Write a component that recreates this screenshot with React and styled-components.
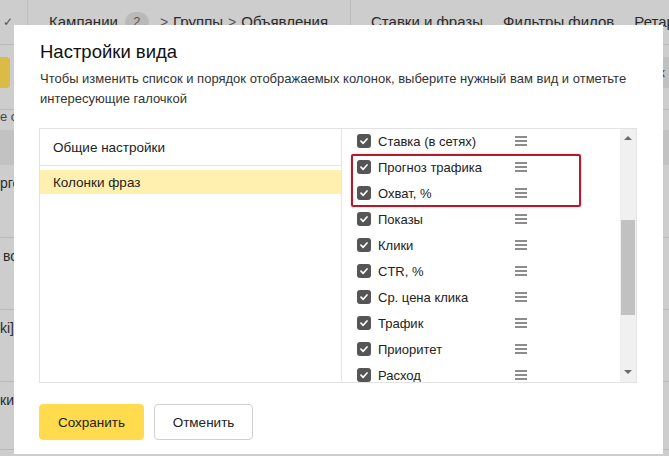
import React from 'react'
import styled, { createGlobalStyle } from 'styled-components'

const GlobalStyle = createGlobalStyle`
html, body {
  margin: 0;
  padding: 0;
}
body {
  font-family: "Liberation Sans", Arial, sans-serif;
  color: #222;
}
`;

const Screen = styled.div`
position: relative;
width: 669px;
height: 456px;
overflow: hidden;
background: #cdcdcd;
`;

/* ---------- page under the overlay ---------- */

const TopBar = styled.div`
height: 45px;
box-sizing: border-box;
border-bottom: 1px solid #bababa;
display: flex;
align-items: flex-start;
padding-top: 12px;
font-size: 15px;
line-height: 20px;
color: #2a2a2a;
white-space: nowrap;
overflow: hidden;
`;

const Tick = styled.div`
flex-shrink: 0;
width: 27px;
padding-left: 3px;
box-sizing: border-box;
font-size: 12px;
color: #555;
`;

const BarDivider = styled.div`
flex-shrink: 0;
width: 1px;
height: 45px;
margin-top: -12px;
background: #bcbcbc;
`;

const Crumbs = styled.div`
flex-shrink: 0;
display: flex;
align-items: center;
padding-left: 21px;
width: 322px;
box-sizing: border-box;
`;

const Badge = styled.span`
display: inline-flex;
align-items: center;
justify-content: center;
width: 24px;
height: 20px;
margin: 0 11px 0 7px;
border-radius: 10px;
background: #b9b9b9;
color: #555;
font-size: 13px;
`;

const Sep = styled.span`
margin: 0 5px 0 0;
color: #555;
font-size: 14px;
`;

const Crumb = styled.span`
margin-right: ${p => p.mr || 0}px;
`;

const Tabs = styled.div`
flex-shrink: 0;
display: flex;
gap: 20px;
padding-left: 20px;
`;

const Toolbar = styled.div`
height: 65px;
box-sizing: border-box;
border-bottom: 1px solid #bababa;
display: flex;
align-items: center;
justify-content: space-between;
padding-bottom: 10px;
`;

const GhostButton = styled.div`
height: 31px;
width: ${p => p.w}px;
margin: ${p => p.m};
border-radius: 4px;
background: ${p => p.bg};
font-size: 13px;
line-height: 31px;
padding-left: 4px;
box-sizing: border-box;
color: #333;
`;

const FilterLine = styled.div`
height: 20px;
font-size: 13px;
line-height: 14px;
color: #444;
`;

const HeadBand = styled.div`
height: 35px;
background: #c2c2c2;
`;

const DataRow = styled.div`
height: ${p => p.h}px;
box-sizing: border-box;
border-bottom: 1px solid #bababa;
font-size: 14px;
padding-top: 10px;
padding-left: ${p => p.pl || 0}px;
color: #2a2a2a;
`;

/* ---------- modal ---------- */

const Modal = styled.div`
position: absolute;
left: 14px;
top: 25px;
width: 649px;
height: 429px;
background: #fff;
box-sizing: border-box;
padding: 12px 26px 0 25px;
display: flex;
flex-direction: column;
`;

const Title = styled.h2`
margin: 2px 0 0 1px;
font-weight: 400;
font-size: 18.5px;
line-height: 26px;
color: #111;
`;

const Description = styled.p`
margin: 4px 0 0 1px;
font-size: 13px;
line-height: 20px;
color: #333;
`;

const Panel = styled.div`
margin-top: 19px;
height: 255px;
border: 1px solid #e3e3e3;
box-sizing: border-box;
display: flex;
`;

const Sections = styled.div`
width: 301px;
border-right: 1px solid #e6e6e6;
`;

const Section = styled.div`
height: ${p => (p.active ? 24 : 36)}px;
margin-top: ${p => (p.active ? 4 : 0)}px;
border-bottom: ${p => (p.active ? 'none' : '1px solid #e6e6e6')};
background: ${p => (p.active ? '#fff0b0' : 'transparent')};
display: flex;
align-items: center;
padding-left: 13px;
font-size: 13.5px;
color: #222;
`;

const Columns = styled.div`
position: relative;
flex: 1;
display: flex;
overflow: hidden;
`;

const List = styled.div`
flex: 1;
margin-top: -1px;
padding-left: 15px;
`;

const Item = styled.div`
height: 26px;
display: flex;
align-items: center;
`;

const Check = styled.span`
width: 14px;
height: 14px;
border-radius: 3px;
background: #555;
display: inline-flex;
align-items: center;
justify-content: center;
margin-right: 7px;
flex-shrink: 0;
`;

const Label = styled.span`
width: 137px;
font-size: 13px;
color: #222;
white-space: nowrap;
`;

const Handle = styled.span`
width: 12px;
height: 10px;
display: flex;
flex-direction: column;
justify-content: space-between;
& > i {
  display: block;
  height: 2px;
  background: #8c8c8c;
}
`;

const Highlight = styled.div`
position: absolute;
left: 9px;
top: 25px;
width: 230px;
height: 53px;
border: 2px solid #b31b2c;
border-radius: 2px;
box-sizing: border-box;
box-shadow: 0 0 2px rgba(179, 27, 44, 0.35);
`;

const Scrollbar = styled.div`
width: 16px;
background: #f0f0f0;
display: flex;
flex-direction: column;
align-items: center;
`;

const Arrow = styled.div`
width: 0;
height: 0;
border-left: 4px solid transparent;
border-right: 4px solid transparent;
${p => (p.down ? 'border-top: 4px solid #6a6a6a;' : 'border-bottom: 4px solid #6a6a6a;')}
margin: ${p => (p.down ? '0 0 8px' : '7px 0 0')};
`;

const Track = styled.div`
flex: 1;
width: 100%;
padding: 80px 1px 55px;
box-sizing: border-box;
display: flex;
`;

const Thumb = styled.div`
flex: 1;
background: #c1c1c1;
`;

const Actions = styled.div`
margin-top: 21px;
display: flex;
gap: 10px;
`;

const Button = styled.button`
height: 36px;
width: ${p => p.w}px;
border-radius: 4px;
border: 1px solid ${p => (p.primary ? '#ffdb4d' : '#d0d0d0')};
background: ${p => (p.primary ? '#ffdb4d' : '#fff')};
font-family: "Liberation Sans", Arial, sans-serif;
font-size: 13.5px;
color: #222;
padding: 0;
`;

const columns = [
  'Ставка (в сетях)',
  'Прогноз трафика',
  'Охват, %',
  'Показы',
  'Клики',
  'CTR, %',
  'Ср. цена клика',
  'Трафик',
  'Приоритет',
  'Расход',
];

const CheckMark = () => (
  <svg width="10" height="10" viewBox="0 0 10 10">
    <path d="M2 5.2 L4.2 7.3 L8 3" fill="none" stroke="#fff" strokeWidth="1.7" strokeLinecap="round" strokeLinejoin="round" />
  </svg>
);

const App = () => {
  return (
    <Screen>
      <GlobalStyle />
      <TopBar>
        <Tick>✓</Tick>
        <BarDivider />
        <Crumbs>
          <Crumb>Кампании</Crumb>
          <Badge>2</Badge>
          <Sep>&gt;</Sep>
          <Crumb mr={5}>Группы</Crumb>
          <Sep>&gt;</Sep>
          <Crumb>Объявления</Crumb>
        </Crumbs>
        <BarDivider />
        <Tabs>
          <span>Ставки и фразы</span>
          <span>Фильтры филов</span>
          <span>Ретаргетинг</span>
        </Tabs>
      </TopBar>
      <Toolbar>
        <GhostButton w={60} m="0 0 0 -50px" bg="#d9bb45" />
        <GhostButton w={40} m="0 -26px 0 0" bg="#c0c0c0">к</GhostButton>
      </Toolbar>
      <FilterLine>е с</FilterLine>
      <HeadBand />
      <DataRow h={73}>рге</DataRow>
      <DataRow h={72} pl={3}>вс</DataRow>
      <DataRow h={72}>ki]</DataRow>
      <DataRow h={68}>ки]</DataRow>

      <Modal>
        <Title>Настройки вида</Title>
        <Description>
          Чтобы изменить список и порядок отображаемых колонок, выберите нужный вам вид и отметьте интересующие галочкой
        </Description>
        <Panel>
          <Sections>
            <Section>Общие настройки</Section>
            <Section active>Колонки фраз</Section>
          </Sections>
          <Columns>
            <List>
              {columns.map(c => (
                <Item key={c}>
                  <Check><CheckMark /></Check>
                  <Label>{c}</Label>
                  <Handle><i /><i /><i /></Handle>
                </Item>
              ))}
            </List>
            <Highlight />
            <Scrollbar>
              <Arrow />
              <Track><Thumb /></Track>
              <Arrow down />
            </Scrollbar>
          </Columns>
        </Panel>
        <Actions>
          <Button primary w={105}>Сохранить</Button>
          <Button w={99}>Отменить</Button>
        </Actions>
      </Modal>
    </Screen>
  )
}

export default App
